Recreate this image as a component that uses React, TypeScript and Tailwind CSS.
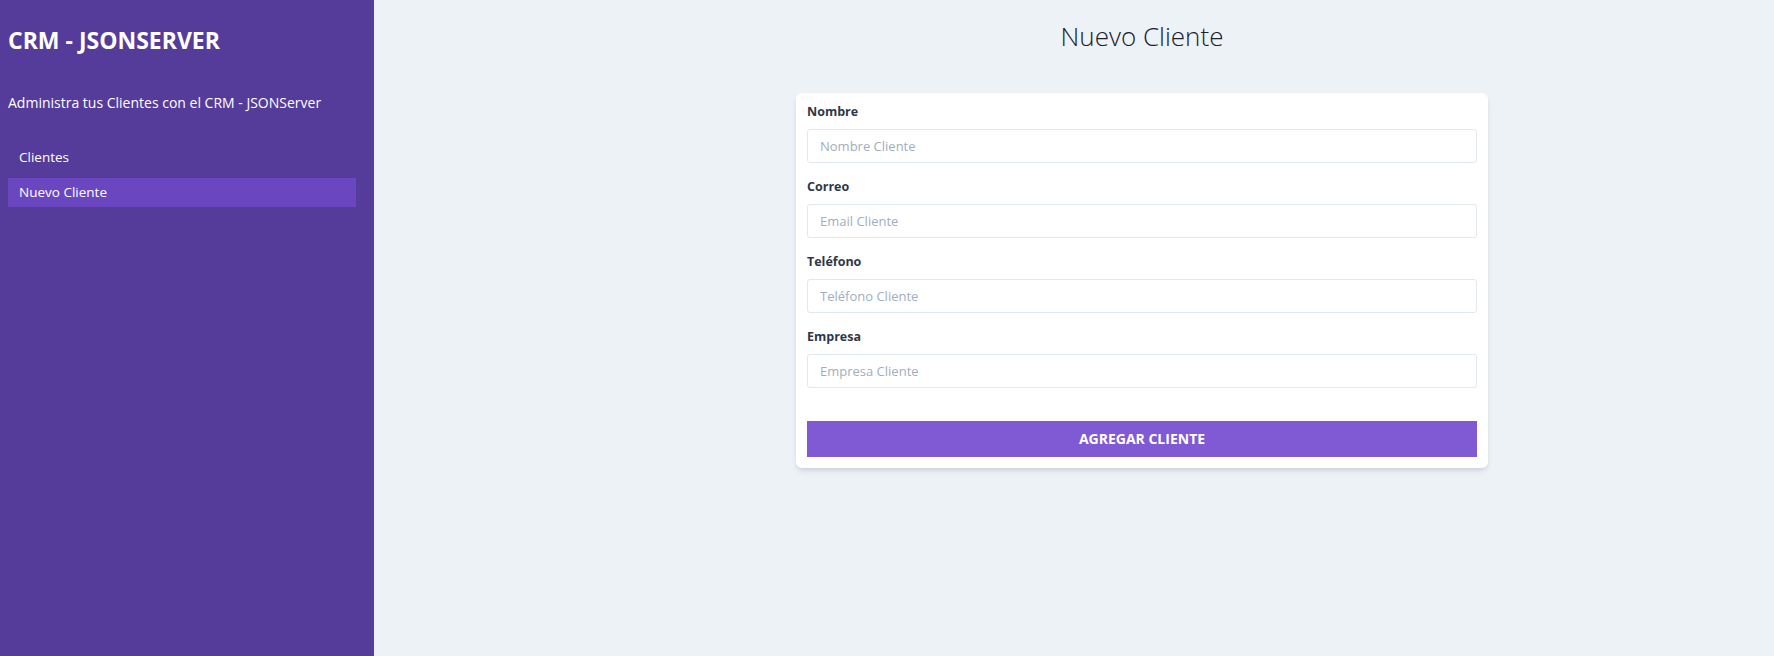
import React from 'react';

const fields = [
  { id: 'nombre', label: 'Nombre', placeholder: 'Nombre Cliente', type: 'text' },
  { id: 'email', label: 'Correo', placeholder: 'Email Cliente', type: 'email' },
  { id: 'telefono', label: 'Teléfono', placeholder: 'Teléfono Cliente', type: 'tel' },
  { id: 'empresa', label: 'Empresa', placeholder: 'Empresa Cliente', type: 'text' },
];

function Sidebar() {
  return (
    <aside className="w-[374px] shrink-0 bg-[#553C9A] px-2 pt-6 text-white">
      <h2 className="text-[23px] leading-8 font-bold">CRM - JSONSERVER</h2>
      <p className="mt-9 text-sm leading-[22px]">Administra tus Clientes con el CRM - JSONServer</p>

      <nav className="mt-[29px] w-[348px]">
        <a href="#" className="block px-[11px] py-1 text-[13.5px] leading-[21px] text-white">
          Clientes
        </a>
        <a href="#" className="mt-1.5 block bg-[#6B46C1] px-[11px] py-1 text-[13.5px] leading-[21px] text-white">
          Nuevo Cliente
        </a>
      </nav>
    </aside>
  );
}

export default function App() {
  return (
    <div className="flex h-screen bg-[#EDF2F7] font-['Open_Sans',_'Noto_Sans',_sans-serif]">
      <Sidebar />

      <main className="flex-1 pl-[136px] pt-[19px]">
        <h1 className="text-center text-[26px] leading-[34px] font-light text-[#1A202C]">Nuevo Cliente</h1>

        <div className="mx-auto mt-10 w-[692px] rounded-md bg-white px-[11px] pt-[9px] pb-[11px] shadow-md">
          <form className="flex flex-col">
            {fields.map((f) => (
              <div key={f.id} className="mb-3.5 flex flex-col">
                <label htmlFor={f.id} className="mb-[7px] text-[12.5px] leading-5 font-bold text-[#2D3748]">
                  {f.label}
                </label>
                <input
                  id={f.id}
                  type={f.type}
                  placeholder={f.placeholder}
                  className="h-[34px] w-full rounded-[3px] border border-[#E2E8F0] px-3 text-[13px] text-[#4A5568] placeholder:text-[#A0AEC0] focus:outline-none"
                />
              </div>
            ))}

            <button
              type="submit"
              className="mt-[19px] h-9 w-full bg-[#805AD5] text-sm font-bold uppercase text-white"
            >
              Agregar Cliente
            </button>
          </form>
        </div>
      </main>
    </div>
  );
}
